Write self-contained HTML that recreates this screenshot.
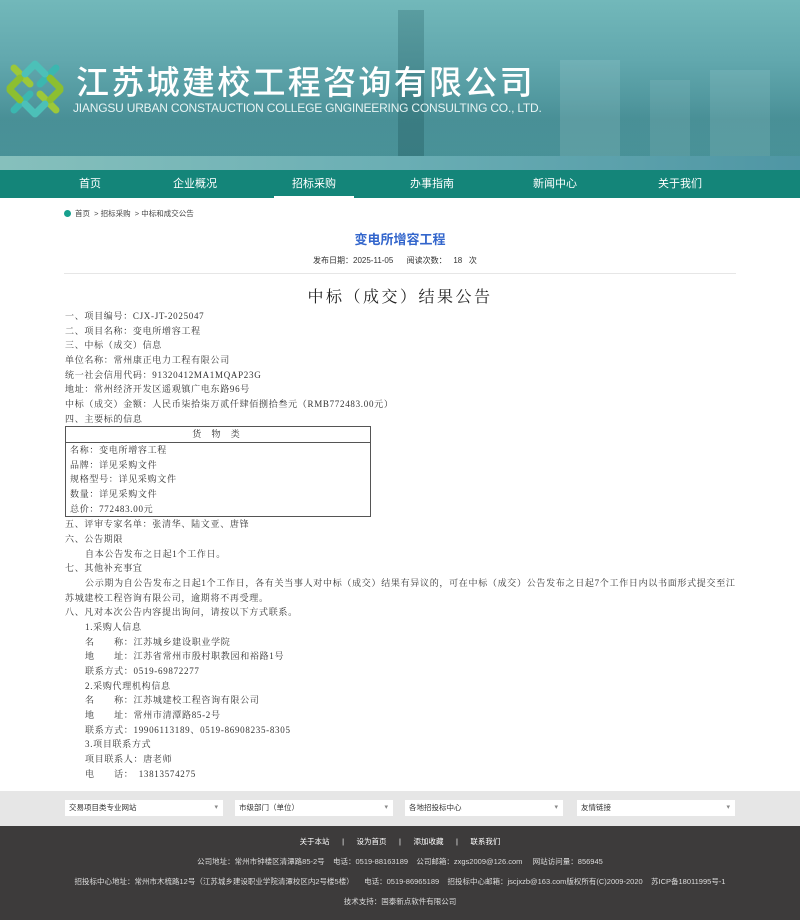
<!DOCTYPE html>
<html><head><meta charset="utf-8">
<style>
*{margin:0;padding:0;box-sizing:border-box}
body{width:800px;height:920px;overflow:hidden;background:#fff;font-family:"Liberation Sans","Noto Sans CJK SC",sans-serif;position:relative}
.banner{position:absolute;left:0;top:0;width:800px;height:170px;background:linear-gradient(180deg,#72b8ba 0%,#62a8ae 35%,#4a9198 70%,#4f9aa0 100%);overflow:hidden}
.banner .city{position:absolute;bottom:0}
.logoName{position:absolute;left:76px;top:60px;color:#fff;font-size:33px;font-weight:500;letter-spacing:2.3px;font-family:"Noto Sans CJK SC",sans-serif;line-height:40px}
.logoEn{position:absolute;left:73px;top:101px;color:#e8f4f4;font-size:12px;letter-spacing:-.2px;white-space:nowrap}
.nav{position:absolute;left:0;top:170px;width:800px;height:28px;background:#148579}
.nav span{position:absolute;top:0;line-height:28px;color:#fff;font-size:11px;width:80px;text-align:center}
.nav .act{border-bottom:3px solid #fff;height:29px}
.crumb{position:absolute;left:64px;top:208px;font-size:7.5px;color:#444}
.crumb i{display:inline-block;width:7px;height:7px;border-radius:50%;background:#17a08e;margin-right:4px;vertical-align:-1px}
.t1{position:absolute;left:0;width:800px;text-align:center;top:229px;color:#3366cc;font-size:13px;font-weight:bold}
.meta{position:absolute;left:313px;top:255px;font-size:8px;color:#333;white-space:pre}
.hr{position:absolute;left:64px;top:273px;width:672px;border-top:1px solid #e6e6e6}
.t2{position:absolute;left:0;width:800px;text-align:center;top:284px;font-size:16px;letter-spacing:2.5px;color:#222;font-family:"Liberation Serif","Noto Serif CJK SC",serif}
.body{position:absolute;left:65px;top:309px;width:680px;font-family:"Liberation Serif","Noto Serif CJK SC",serif;font-size:9px;letter-spacing:.7px;line-height:14.65px;color:#333;white-space:nowrap}
.body .in{padding-left:20px}
.body .in2{white-space:normal;word-break:break-all;text-indent:20px;width:675px}
table{border-collapse:collapse;width:306px;margin:0;border:1px solid #555}
td{padding:0 4px;line-height:14.7px;font-size:9px}
.gbar{position:absolute;left:0;top:791px;width:800px;height:35px;background:#e6e6e6}
.sel{position:absolute;top:800px;height:16px;width:158px;background:#fff;font-size:7.5px;line-height:16px;padding-left:4px;color:#333}
.sel:after{content:"▾";position:absolute;right:5px;top:0;color:#888;font-size:7px}
.foot{position:absolute;left:0;top:826px;width:800px;height:94px;background:#3d3b3b;color:#ddd;font-size:7.5px}
.foot div{position:absolute;left:0;width:800px;text-align:center;white-space:pre}
</style></head><body>
<div class="banner">
<div class="city" style="left:0;width:800px;height:70px;background:linear-gradient(180deg,rgba(60,130,135,0),rgba(60,130,135,.35))"></div>
<div class="city" style="left:398px;width:26px;height:160px;background:linear-gradient(180deg,rgba(40,100,105,.3),rgba(40,100,105,.5))"></div>
<div class="city" style="left:560px;width:60px;height:110px;background:rgba(200,225,225,.15)"></div>
<div class="city" style="left:650px;width:40px;height:90px;background:rgba(200,225,225,.12)"></div>
<div class="city" style="left:710px;width:60px;height:100px;background:rgba(200,225,225,.14)"></div>
<div class="city" style="left:0;width:800px;height:14px;background:linear-gradient(90deg,#86c0bc,#6aaeb4 50%,#4f96a4)"></div>
<svg style="position:absolute;left:6px;top:60px" width="58" height="58" viewBox="0 0 58 58">
<g stroke-linecap="round" stroke-width="7" fill="none">
<path d="M8 8 L24 24" stroke="#9cc83a"/><path d="M50 50 L34 34" stroke="#9cc83a"/>
<path d="M50 8 L34 24" stroke="#3bb7b0"/><path d="M8 50 L24 34" stroke="#3bb7b0"/>
<path d="M4 28 L14 18 M4 30 L14 40" stroke="#8cbf30"/>
<path d="M54 28 L44 18 M54 30 L44 40" stroke="#8cbf30"/>
<path d="M29 4 L19 14 M29 4 L39 14" stroke="#4cc0b8"/>
<path d="M29 54 L19 44 M29 54 L39 44" stroke="#4cc0b8"/>
</g></svg>
<div class="logoName">江苏城建校工程咨询有限公司</div>
<div class="logoEn">JIANGSU URBAN CONSTAUCTION COLLEGE GNGINEERING CONSULTING CO., LTD.</div>
</div>
<div class="nav">
<span style="left:50px">首页</span><span style="left:155px">企业概况</span><span class="act" style="left:274px">招标采购</span><span style="left:392px">办事指南</span><span style="left:515px">新闻中心</span><span style="left:640px">关于我们</span>
</div>
<div class="crumb"><i></i>首页 &nbsp;&gt; 招标采购 &nbsp;&gt; 中标和成交公告</div>
<div class="t1">变电所增容工程</div>
<div class="meta">发布日期：2025-11-05      阅读次数：   18   次</div>
<div class="hr"></div>
<div class="t2">中标（成交）结果公告</div>
<div class="body">
<div>一、项目编号：CJX-JT-2025047</div>
<div>二、项目名称：变电所增容工程</div>
<div>三、中标（成交）信息</div>
<div>单位名称：常州康正电力工程有限公司</div>
<div>统一社会信用代码：91320412MA1MQAP23G</div>
<div>地址：常州经济开发区遥观镇广电东路96号</div>
<div>中标（成交）金额：人民币柒拾柒万贰仟肆佰捌拾叁元（RMB772483.00元）</div>
<div>四、主要标的信息</div>
<table>
<tr><td style="text-align:center;letter-spacing:4px;border-bottom:1px solid #555">货 物 类</td></tr>
<tr><td>名称：变电所增容工程</td></tr>
<tr><td>品牌：详见采购文件</td></tr>
<tr><td>规格型号：详见采购文件</td></tr>
<tr><td>数量：详见采购文件</td></tr>
<tr><td>总价：772483.00元</td></tr>
</table>
<div>五、评审专家名单：张清华、陆文亚、唐锋</div>
<div>六、公告期限</div>
<div class="in">自本公告发布之日起1个工作日。</div>
<div>七、其他补充事宜</div>
<div class="in2">公示期为自公告发布之日起1个工作日，各有关当事人对中标（成交）结果有异议的，可在中标（成交）公告发布之日起7个工作日内以书面形式提交至江苏城建校工程咨询有限公司，逾期将不再受理。</div>
<div>八、凡对本次公告内容提出询问，请按以下方式联系。</div>
<div class="in">1.采购人信息</div>
<div class="in">名　　称：江苏城乡建设职业学院</div>
<div class="in">地　　址：江苏省常州市殷村职教园和裕路1号</div>
<div class="in">联系方式：0519-69872277</div>
<div class="in">2.采购代理机构信息</div>
<div class="in">名　　称：江苏城建校工程咨询有限公司</div>
<div class="in">地　　址：常州市清潭路85-2号</div>
<div class="in">联系方式：19906113189、0519-86908235-8305</div>
<div class="in">3.项目联系方式</div>
<div class="in">项目联系人：唐老师</div>
<div class="in">电　　话：　13813574275</div>
</div>
<div class="gbar"></div>
<div class="sel" style="left:65px">交易项目类专业网站</div>
<div class="sel" style="left:235px">市级部门（单位）</div>
<div class="sel" style="left:405px">各地招投标中心</div>
<div class="sel" style="left:577px">友情链接</div>
<div class="foot">
<div style="top:10px;color:#fff">关于本站      |      设为首页      |      添加收藏      |      联系我们</div>
<div style="top:30px">公司地址：常州市钟楼区清潭路85-2号    电话：0519-88163189    公司邮箱：zxgs2009@126.com     网站访问量：856945</div>
<div style="top:50px">招投标中心地址：常州市木梳路12号（江苏城乡建设职业学院清潭校区内2号楼5楼）     电话：0519-86965189    招投标中心邮箱：jscjxzb@163.com版权所有(C)2009-2020    苏ICP备18011995号-1</div>
<div style="top:70px">技术支持：国泰新点软件有限公司</div>
</div>
</body></html>
